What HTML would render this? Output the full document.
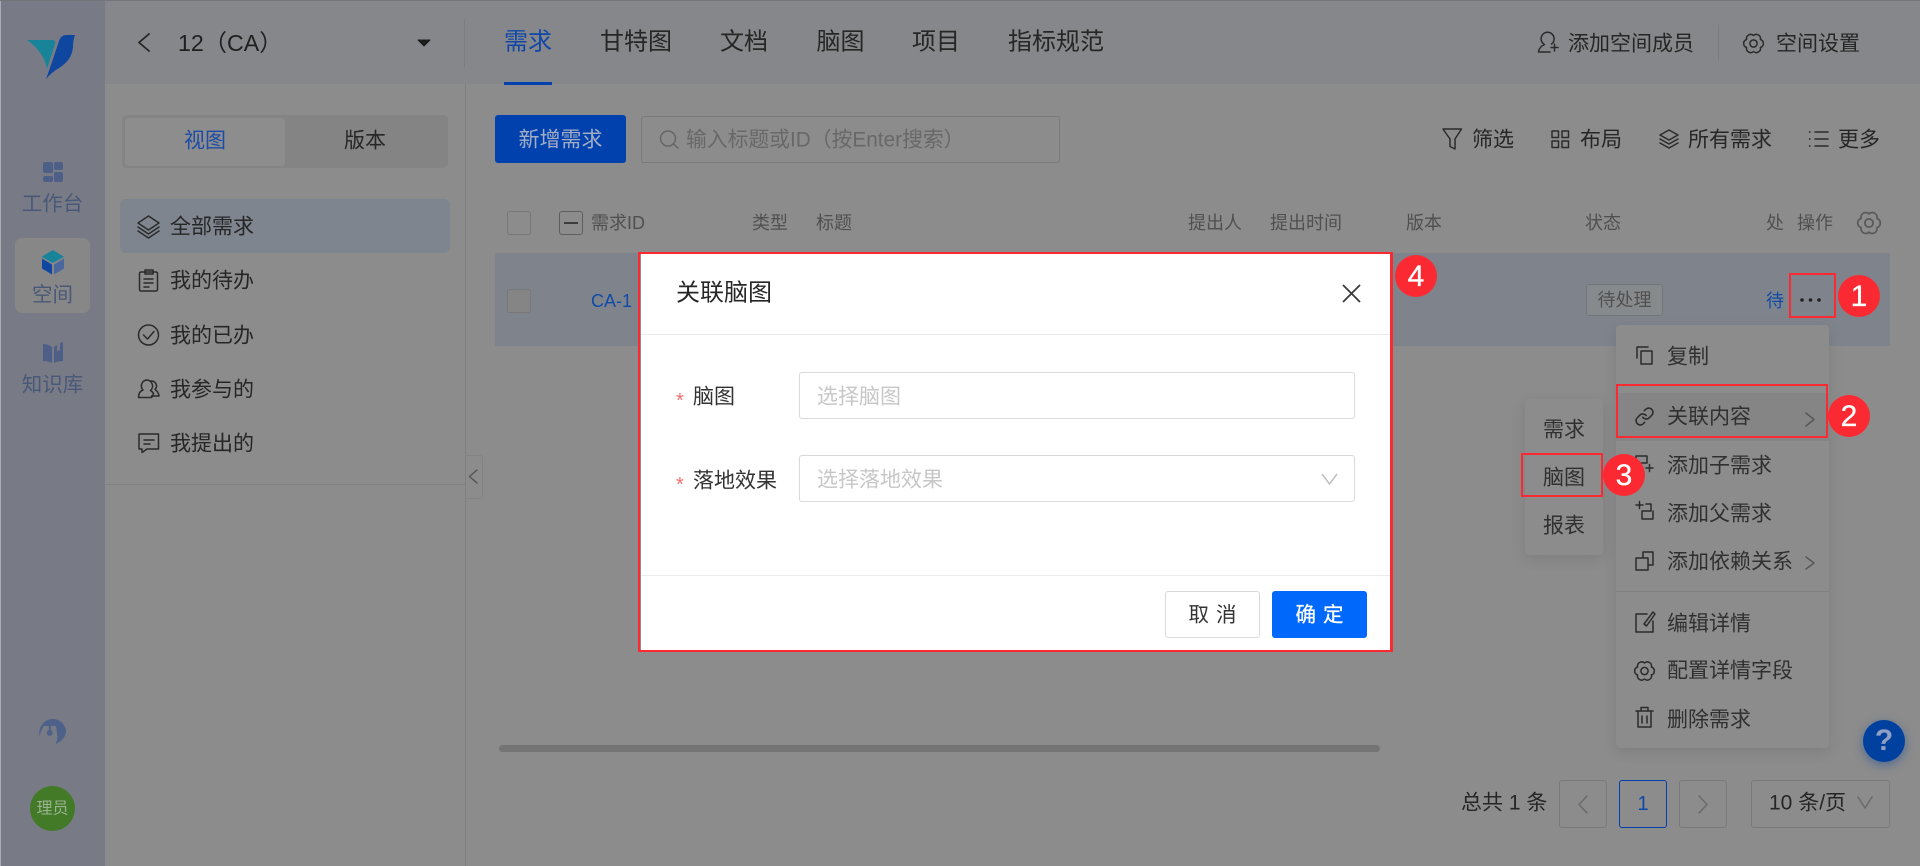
<!DOCTYPE html>
<html lang="zh-CN"><head><meta charset="utf-8"><title>关联脑图</title>
<style>
html,body{margin:0;padding:0;width:1920px;height:866px;overflow:hidden;background:#8c8c8c;font-family:"Liberation Sans","Noto Sans CJK SC",sans-serif}
.b{position:absolute;box-sizing:border-box}
.t{position:absolute;white-space:nowrap;transform:translateY(-50%);line-height:1.2;color:#262626;font-size:21px}
.c{transform:translate(-50%,-50%)}
.th{font-size:18px;color:#505050}
.m{color:#303030}
.red{position:absolute;box-sizing:border-box;border:2px solid #fb2a32}
.n{position:absolute;width:42px;height:42px;border-radius:50%;background:#fb2a32;color:#fff;font-size:30px;line-height:43px;text-align:center;-webkit-text-stroke:.3px #fff}
svg{position:absolute;left:0;top:0}
.ic{fill:none;stroke:#2b2b2b;stroke-width:1.5;stroke-linejoin:round;stroke-linecap:round}
</style></head><body>
<!-- regions -->
<div class="b" style="left:0;top:0;width:1px;height:866px;background:#a9acb4"></div>
<div class="b" style="left:1px;top:0;width:104px;height:866px;background:#787b85"></div>
<div class="b" style="left:105px;top:0;width:1815px;height:84px;background:#86878a"></div>
<div class="b" style="left:0;top:0;width:1920px;height:1px;background:#74757a"></div>
<div class="b" style="left:464px;top:19px;width:1px;height:48px;background:#7c7d80"></div>
<div class="b" style="left:465px;top:84px;width:1px;height:782px;background:#808080"></div>
<div class="b" style="left:504px;top:82px;width:48px;height:3px;background:#0041ad"></div>
<div class="b" style="left:105px;top:484px;width:360px;height:1px;background:#808080"></div>
<div class="b" style="left:465px;top:455px;width:18px;height:44px;border:1px solid #838383;border-left:0;border-radius:0 3px 3px 0"></div>
<!-- nav -->
<div class="b" style="left:15px;top:238px;width:75px;height:75px;border-radius:7px;background:#878788"></div>
<span class="t c" style="left:52.5px;top:205px;font-size:20.5px;color:#4a5878">工作台</span>
<span class="t c" style="left:52.5px;top:296px;font-size:20.5px;color:#4a5878">空间</span>
<span class="t c" style="left:52.5px;top:386px;font-size:20.5px;color:#4a5878">知识库</span>
<div class="b" style="left:30px;top:786px;width:45px;height:45px;border-radius:50%;background:#437a28"></div>
<span class="t c" style="left:52.5px;top:809px;font-size:16px;color:#9ab28f">理员</span>
<!-- top bar -->
<span class="t" style="left:178px;top:44px;font-size:23.2px;color:#1f1f1f">12（CA）</span>
<span class="t" style="left:504px;top:43px;font-size:24px;color:#0f47a8">需求</span>
<span class="t" style="left:600px;top:43px;font-size:24px">甘特图</span>
<span class="t" style="left:720px;top:43px;font-size:24px">文档</span>
<span class="t" style="left:816.5px;top:43px;font-size:24px">脑图</span>
<span class="t" style="left:912px;top:43px;font-size:24px">项目</span>
<span class="t" style="left:1008px;top:43px;font-size:24px">指标规范</span>
<span class="t" style="left:1568px;top:44px">添加空间成员</span>
<div class="b" style="left:1718px;top:25px;width:1px;height:36px;background:#7c7d80"></div>
<span class="t" style="left:1776px;top:44px">空间设置</span>
<!-- left panel -->
<div class="b" style="left:122px;top:115px;width:326px;height:53px;border-radius:5px;background:#848484"></div>
<div class="b" style="left:125px;top:118px;width:160px;height:48px;border-radius:4px;background:#8d8d8d"></div>
<span class="t c" style="left:205px;top:141px;color:#1d4ca8">视图</span>
<span class="t c" style="left:365px;top:141px">版本</span>
<div class="b" style="left:120px;top:199px;width:330px;height:54px;border-radius:6px;background:#7e858e"></div>
<span class="t" style="left:170px;top:227px">全部需求</span>
<span class="t" style="left:170px;top:281px">我的待办</span>
<span class="t" style="left:170px;top:336px">我的已办</span>
<span class="t" style="left:170px;top:390px">我参与的</span>
<span class="t" style="left:170px;top:444px">我提出的</span>
<!-- toolbar -->
<div class="b" style="left:495px;top:115px;width:131px;height:48px;border-radius:3px;background:#0041ad"></div>
<span class="t c" style="left:560.5px;top:140px;color:#a3adc4">新增需求</span>
<div class="b" style="left:641px;top:116px;width:419px;height:47px;border:1px solid #7a7a7a;border-radius:3px"></div>
<span class="t" style="left:686px;top:141px;font-size:20.8px;color:#686868">输入标题或ID（按Enter搜索）</span>
<span class="t" style="left:1472px;top:140px">筛选</span>
<span class="t" style="left:1580px;top:140px">布局</span>
<span class="t" style="left:1688px;top:140px">所有需求</span>
<span class="t" style="left:1838px;top:140px">更多</span>
<!-- table -->
<span class="t th" style="left:591px;top:224px">需求ID</span>
<span class="t th" style="left:752px;top:224px">类型</span>
<span class="t th" style="left:816px;top:224px">标题</span>
<span class="t th" style="left:1188px;top:224px">提出人</span>
<span class="t th" style="left:1270px;top:224px">提出时间</span>
<span class="t th" style="left:1406px;top:224px">版本</span>
<span class="t th" style="left:1585px;top:224px">状态</span>
<span class="t th" style="left:1766px;top:224px">处</span>
<span class="t th" style="left:1797px;top:224px">操作</span>
<div class="b" style="left:507px;top:211px;width:24px;height:24px;border:1px solid #787878;border-radius:3px"></div>
<div class="b" style="left:559px;top:211px;width:24px;height:24px;border:1px solid #5f5f5f;border-radius:3px"></div>
<div class="b" style="left:564px;top:222px;width:14px;height:2px;background:#3c3c3c"></div>
<div class="b" style="left:495px;top:253px;width:1395px;height:93px;background:#7f848c"></div>
<div class="b" style="left:507px;top:289px;width:24px;height:24px;border:1px solid #787878;border-radius:3px;background:#858585"></div>
<span class="t" style="left:591px;top:302px;font-size:18px;color:#0f4ba8">CA-1</span>
<div class="b" style="left:1586px;top:284px;width:77px;height:32px;border:1px solid #757575;border-radius:3px;background:#878a8d"></div>
<span class="t c" style="left:1624.5px;top:301px;font-size:18px;color:#505050">待处理</span>
<span class="t" style="left:1766px;top:302px;font-size:18px;color:#0f4ba8">待</span>
<div class="b" style="left:499px;top:745px;width:881px;height:7px;border-radius:4px;background:#747474"></div>
<!-- pagination -->
<span class="t" style="left:1461px;top:803px;font-size:21px">总共 1 条</span>
<div class="b" style="left:1559px;top:780px;width:48px;height:48px;border:1px solid #7a7a7a;border-radius:3px"></div>
<div class="b" style="left:1619px;top:780px;width:48px;height:48px;border:1px solid #0041ad;border-radius:3px"></div>
<span class="t c" style="left:1643px;top:804px;font-size:20px;color:#0f47a8">1</span>
<div class="b" style="left:1679px;top:780px;width:48px;height:48px;border:1px solid #7a7a7a;border-radius:3px"></div>
<div class="b" style="left:1751px;top:780px;width:139px;height:48px;border:1px solid #7a7a7a;border-radius:3px"></div>
<span class="t" style="left:1769px;top:803px;font-size:21px">10 条/页</span>
<!-- help -->
<div class="b" style="left:1863px;top:720px;width:42px;height:42px;border-radius:50%;background:#00409f;box-shadow:0 3px 10px rgba(0,64,159,.45)"></div>
<span class="t c" style="left:1884px;top:741px;font-size:30px;font-weight:bold;color:#8fa0c4">?</span>
<!-- dropdown -->
<div class="b" style="left:1616px;top:325px;width:213px;height:423px;border-radius:4px;background:#8c8c8c;box-shadow:0 4px 14px rgba(0,0,0,.1)"></div>
<div class="b" style="left:1616px;top:393px;width:213px;height:48px;background:#858585"></div>
<div class="b" style="left:1616px;top:591px;width:213px;height:1px;background:#808080"></div>
<span class="t m" style="left:1667px;top:357px">复制</span>
<span class="t m" style="left:1667px;top:417px">关联内容</span>
<span class="t m" style="left:1667px;top:466px">添加子需求</span>
<span class="t m" style="left:1667px;top:514px">添加父需求</span>
<span class="t m" style="left:1667px;top:562px">添加依赖关系</span>
<span class="t m" style="left:1667px;top:624px">编辑详情</span>
<span class="t m" style="left:1667px;top:671px">配置详情字段</span>
<span class="t m" style="left:1667px;top:720px">删除需求</span>
<!-- submenu -->
<div class="b" style="left:1525px;top:399px;width:78px;height:156px;border-radius:4px;background:#8c8c8c;box-shadow:0 4px 14px rgba(0,0,0,.1)"></div>
<span class="t m" style="left:1543px;top:430px">需求</span>
<span class="t m" style="left:1543px;top:478px">脑图</span>
<span class="t m" style="left:1543px;top:526px">报表</span>
<!-- icons -->
<svg width="1920" height="866" viewBox="0 0 1920 866">
<defs><g id="gear"><path d="M6.93 -4 A4.2 4.2 0 0 1 6.93 4 A4.2 4.2 0 0 1 0 8 A4.2 4.2 0 0 1 -6.93 4 A4.2 4.2 0 0 1 -6.93 -4 A4.2 4.2 0 0 1 0 -8 A4.2 4.2 0 0 1 6.93 -4Z"/><circle r="3.6"/></g></defs>
<!-- logo -->
<path d="M27 40 L52 40 Q56 40 55 44 L47 69 Q44 52 27 40Z" fill="#18849a"/>
<path d="M75 35 L66 35 Q61 35 59 41 L52 62 L46 79 Q52 72 59 68 Q72 60 73 47 Q73 40 75 35Z" fill="#0f47a0"/>
<!-- nav icons -->
<g fill="#4d5f87"><rect x="43" y="162" width="10" height="11" rx="2"/><rect x="43" y="176" width="10" height="6" rx="2"/><rect x="54" y="162" width="9" height="8" rx="2"/><rect x="54" y="172" width="9" height="10" rx="2"/>
<path d="M43 344 Q48 344 52 347 V363 Q48 361 43 361Z M54 347 Q55 346 57 345 V352 L58.500 350 L60 351 V343 L63 342 V361 Q58 361 54 363Z"/></g>
<path d="M52.700 250 L64 256.700 L52.700 263 L41.700 256.700Z" fill="#18849a"/><path d="M42 258.500 L52 264.500 V274.500 L42 268.500Z" fill="#0f47a0"/><path d="M54 264.500 L64 258.500 V268.500 L54 274.500Z" fill="#4a689f"/>
<path d="M39.500 736 A13.500 14 0 0 1 66 730 C66.500 736 62 741 56 744 L57.500 737 L56 726 H44 Q41.500 729 39.500 736Z M48.800 726 H50.800 V730 A3 3 0 1 1 48.800 730Z" fill="#4d6189"/>
<!-- header icons -->
<g class="ic" style="stroke:#262626;stroke-width:1.8"><path d="M149 34 L139 42.500 L149 51"/></g>
<path d="M418 40 H430 L424 46Z" fill="#1c1c1c" stroke="#1c1c1c" stroke-linejoin="round"/>
<g class="ic">
<path d="M1551.500 44 A6.500 6.500 0 1 0 1544.500 44.500 Q1539 47 1538.500 52 H1550 M1551 47.500 H1558 M1554.500 44 V51"/>
<use href="#gear" transform="translate(1753.500,43.500)"/>
<!-- toolbar icons -->
<path d="M1443 129 H1461.500 L1455 139 V149 L1450 146.500 V139Z"/>
<rect x="1552" y="131" width="6.500" height="6.500"/><rect x="1562" y="131" width="6.500" height="6.500"/><rect x="1552" y="141" width="6.500" height="6.500"/><rect x="1562" y="141" width="6.500" height="6.500"/>
<path d="M1669 130 L1678 135 L1669 140 L1660 135Z M1660 139 L1669 144 L1678 139 M1660 143 L1669 148 L1678 143"/>
<path d="M1815 132 H1828 M1815 139 H1828 M1815 146 H1828 M1809.500 132 h.5 M1809.500 139 h.5 M1809.500 146 h.5"/>
<circle cx="668" cy="138.500" r="7.500" style="stroke:#666"/><path d="M673.500 144 L678 148" style="stroke:#666"/>
<!-- menu icons -->
<path d="M148.500 216 L159 223 L148.500 230 L138 223Z M138 227 L148.500 234 L159 227 M138 231 L148.500 238 L159 231"/>
<rect x="139.500" y="272" width="18" height="19" rx="1.500"/><rect x="145" y="270" width="8" height="4"/><path d="M144 279 H153 M144 283 H153 M144 287 H149"/>
<circle cx="148.500" cy="335" r="10"/><path d="M143.500 335 L147.500 339 L154 331.500"/>
<path d="M146.500 380 a6 6 0 0 1 4 10.500 q2 1 3 3 q-1 3 -2 4 H138.500 q0 -6 4.500 -7.500 a6 6 0 0 1 3.500 -10 M151 381 a5 5 0 0 1 4 8.500 q3.500 2 4 6.500 H151.500"/>
<path d="M139 434 H158.500 V449 H147 L142 452.500 V449 H139Z M144 440 H154 M144 444 H150"/>
<use href="#gear" transform="translate(1869,223) scale(1.15)" style="stroke:#585858"/>
<!-- dropdown icons -->
<path d="M1648 347 H1637 V358 M1641 351 H1652 V364 H1641Z"/>
<path transform="translate(1634.3,406.3) scale(.85)" style="stroke-width:1.8" d="M10 13a5 5 0 0 0 7.54.54l3-3a5 5 0 0 0-7.07-7.07l-1.72 1.71M14 11a5 5 0 0 0-7.54-.54l-3 3a5 5 0 0 0 7.07 7.07l1.71-1.71"/>
<path d="M1636 456 H1647 V463 H1636Z M1636 463 V472 H1644 M1646 468 H1653 M1649.500 464.500 V471.500"/>
<path d="M1636 505 H1643 M1639.500 501.500 V508.500 M1646 504 H1651 V511 H1642 V519 H1653 V511"/>
<path d="M1643 558 V552 H1653 V565 H1648 M1636 558 H1648 V570 H1636Z"/>
<path d="M1647 614 H1636 V632 H1653 V621 M1644 624 L1653 612 L1655 614 L1646.500 626Z"/>
<use href="#gear" transform="translate(1644.500,671)"/>
<path d="M1636 711 H1653 M1641 711 V707.500 H1648 V711 M1638 711 V727 H1651 V711 M1642 716 V723 M1647 716 V723"/>
<path d="M1806 413 L1814 419.500 L1806 426 M1806 557 L1814 563 L1806 569" style="stroke:#585858"/>
<path d="M1587 796 L1579 804.500 L1587 813 M1699 796 L1707 804.500 L1699 813 M1858 797 L1865 808 L1872 797" style="stroke:#6a6a6a"/>
<path d="M477 470 L469.500 476.500 L477 483" style="stroke:#505050;stroke-width:1.300"/>
</g>
<circle cx="1802" cy="300" r="1.800" fill="#222"/><circle cx="1810.500" cy="300" r="1.800" fill="#222"/><circle cx="1819" cy="300" r="1.800" fill="#222"/>
</svg>
<!-- modal -->
<div class="b" style="left:638px;top:252px;width:755px;height:400px;background:#fff;border:2px solid #fb2a32;border-right-width:3px"></div>
<div class="b" style="left:640px;top:254px;width:1px;height:396px;background:#8c8c8c"></div>
<div class="b" style="left:641px;top:334px;width:749px;height:1px;background:#ececec"></div>
<div class="b" style="left:641px;top:575px;width:749px;height:1px;background:#ececec"></div>
<span class="t" style="left:676px;top:294px;font-size:24px">关联脑图</span>
<span class="t" style="left:676px;top:401px;color:#f56c6c;font-size:20px">*</span>
<span class="t" style="left:693px;top:397px;color:#333">脑图</span>
<div class="b" style="left:799px;top:372px;width:556px;height:47px;border:1px solid #d9d9d9;border-radius:3px"></div>
<span class="t" style="left:817px;top:397px;color:#c7c7c7">选择脑图</span>
<span class="t" style="left:676px;top:485px;color:#f56c6c;font-size:20px">*</span>
<span class="t" style="left:693px;top:481px;color:#333">落地效果</span>
<div class="b" style="left:799px;top:455px;width:556px;height:47px;border:1px solid #d9d9d9;border-radius:3px"></div>
<span class="t" style="left:817px;top:480px;color:#c7c7c7">选择落地效果</span>
<div class="b" style="left:1165px;top:591px;width:95px;height:47px;border:1px solid #d9d9d9;border-radius:3px;background:#fff"></div>
<span class="t c" style="left:1216px;top:616px;font-size:20.5px;letter-spacing:7px;color:#333">取消</span>
<div class="b" style="left:1272px;top:591px;width:95px;height:47px;border-radius:3px;background:#0069fb"></div>
<span class="t c" style="left:1323px;top:616px;font-size:20.5px;letter-spacing:7px;color:#fff;-webkit-text-stroke:.3px #fff">确定</span>
<svg width="1920" height="866" viewBox="0 0 1920 866" style="pointer-events:none">
<path d="M1343 285 L1360 302 M1360 285 L1343 302" fill="none" stroke="#3a3a3a" stroke-width="1.8"/>
<path d="M1322 474 L1329.500 484 L1337 474" fill="none" stroke="#c0c0c0" stroke-width="1.5"/>
</svg>
<!-- annotations -->
<div class="red" style="left:1789px;top:273px;width:47px;height:45px"></div>
<div class="red" style="left:1616px;top:384px;width:212px;height:54px"></div>
<div class="red" style="left:1521px;top:453px;width:82px;height:44px"></div>
<div class="n" style="left:1838px;top:275px">1</div>
<div class="n" style="left:1828px;top:395px">2</div>
<div class="n" style="left:1603px;top:454px">3</div>
<div class="n" style="left:1395px;top:255px">4</div>
</body></html>
